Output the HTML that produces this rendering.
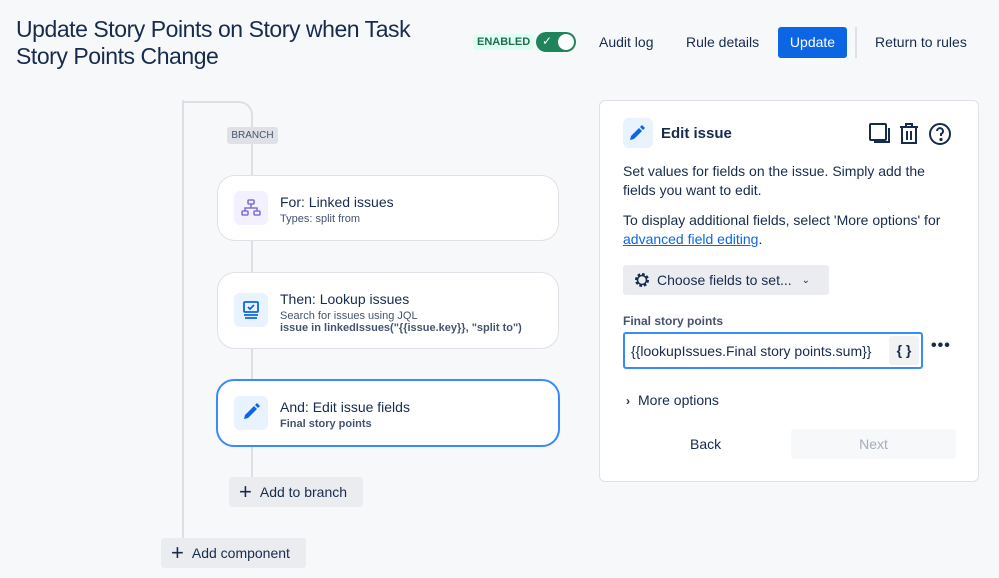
<!DOCTYPE html>
<html><head><meta charset="utf-8"><style>
*{margin:0;padding:0;box-sizing:border-box}
body{width:999px;height:578px;background:#f7f8f9;font-family:"Liberation Sans",sans-serif;color:#172b4d;position:relative;overflow:hidden}
.a{position:absolute}
.card{position:absolute;left:217px;width:342px;background:#fff;border:1px solid #dfe1e6;border-radius:18px}
.ic{position:absolute;left:16px;width:34px;height:34px;border-radius:6px;background:#e9f2ff}
.t{position:absolute;left:62px;font-size:14px;color:#172b4d}
.s{position:absolute;left:62px;font-size:11px;color:#44546f}
.btn{position:absolute;background:#ebecf0;border-radius:3px;font-size:14px;color:#172b4d;display:flex;align-items:center}
</style></head><body>
<div class="a" style="left:16px;top:16px;font-size:23px;line-height:27px;letter-spacing:-0.45px;color:#172b4d">Update Story Points on Story when Task<br>Story Points Change</div>
<div class="a" style="left:473px;top:34px;height:16px;padding:0 4px;background:#dcfff1;color:#216e4e;font-size:11px;font-weight:bold;line-height:16px;border-radius:3px">ENABLED</div>
<div class="a" style="left:536px;top:32px;width:40px;height:20px;border-radius:10px;background:#1f845a">
<span class="a" style="left:6px;top:2px;color:#fff;font-size:12px">✓</span>
<div class="a" style="right:2px;top:2px;width:16px;height:16px;border-radius:50%;background:#fff"></div></div>
<div class="a" style="left:599px;top:34px;font-size:14px">Audit log</div>
<div class="a" style="left:686px;top:34px;font-size:14px">Rule details</div>
<div class="a" style="left:778px;top:27px;width:69px;height:31px;background:#0c66e4;border-radius:3px;color:#fff;font-size:14px;text-align:center;line-height:31px">Update</div>
<div class="a" style="left:855px;top:27px;width:2px;height:31px;background:#dfe1e6"></div>
<div class="a" style="left:875px;top:34px;font-size:14px">Return to rules</div>

<div class="a" style="left:182px;top:100px;width:2px;height:440px;background:#dcdfe4"></div>
<div class="a" style="left:182px;top:101px;width:71px;height:30px;border-top:2px solid #dcdfe4;border-right:2px solid #dcdfe4;border-top-right-radius:14px"></div>
<div class="a" style="left:251px;top:130px;width:2px;height:350px;background:#dcdfe4"></div>
<div class="a" style="left:227px;top:127px;width:51px;height:17px;background:#dfe1e6;border-radius:3px;font-size:10px;color:#44546f;text-align:center;line-height:17px">BRANCH</div>

<div class="card" style="top:175px;height:66px"><div class="ic" style="top:15px;background:#f3f0ff">
<svg width="34" height="34" viewBox="0 0 34 34" fill="none" stroke="#8270db" stroke-width="1.6"><rect x="14" y="9" width="6" height="4" rx="1"/><path d="M17 13v4M11 20v-3h12v3"/><rect x="8" y="20" width="6" height="4" rx="1"/><rect x="20" y="20" width="6" height="4" rx="1"/></svg></div>
<div class="t" style="top:18px">For: Linked issues</div><div class="s" style="top:37px">Types: split from</div></div>

<div class="card" style="top:272px;height:77px"><div class="ic" style="top:20px">
<svg width="34" height="34" viewBox="0 0 34 34" fill="none" stroke="#0c66e4" stroke-width="1.8"><rect x="10" y="9" width="14" height="10" rx="1"/><path d="M14 14l2 2 4-4M10 22h14M11 25h12"/></svg></div>
<div class="t" style="top:18px">Then: Lookup issues</div><div class="s" style="top:37px">Search for issues using JQL</div><div class="s" style="top:49px;font-weight:bold;color:#44546f">issue in linkedIssues("{{issue.key}}, "split to")</div></div>

<div class="card" style="top:379px;height:68px;border:2px solid #388bff;left:216px;width:344px"><div class="ic" style="top:15px">
<svg width="34" height="34" viewBox="0 0 34 34"><path d="M10 23l1-4 9-9 3 3-9 9z M21 9l2-2 3 3-2 2z" fill="#0c66e4"/></svg></div>
<div class="t" style="top:18px">And: Edit issue fields</div><div class="s" style="top:37px;font-weight:bold">Final story points</div></div>

<div class="btn" style="left:229px;top:477px;width:134px;height:30px;padding-left:10px"><span style="font-size:22px;font-weight:300;margin-right:8px;line-height:1">+</span>Add to branch</div>
<div class="btn" style="left:161px;top:538px;width:145px;height:30px;padding-left:10px"><span style="font-size:22px;font-weight:300;margin-right:8px;line-height:1">+</span>Add component</div>

<div class="a" style="left:599px;top:100px;width:380px;height:382px;background:#fff;border:1px solid #dfe1e6;border-radius:6px">
<div class="a" style="left:23px;top:17px;width:30px;height:30px;border-radius:6px;background:#e9f2ff"><svg width="30" height="30" viewBox="0 0 30 30"><path d="M7 22l1-4 8-8 3 3-8 8z M17 9l2-2 3 3-2 2z" fill="#0c66e4"/></svg></div>
<div class="a" style="left:61px;top:24px;font-size:15px;font-weight:bold">Edit issue</div>
<svg class="a" style="left:268px;top:20px" width="86" height="26" viewBox="0 0 86 26" fill="none" stroke="#172b4d" stroke-width="2"><rect x="2" y="3" width="16" height="16" rx="1"/><path d="M21 7v14H6"/><path d="M32 6h18M38 6V3h6v3M34 6v16h14V6M39 10v9M43 10v9"/><circle cx="72" cy="13" r="10"/><path d="M69 10a3 3 0 1 1 4 3v2"/><circle cx="73" cy="18.5" r=".6" fill="#172b4d"/></svg>
<div class="a" style="left:23px;top:61px;font-size:14px;line-height:19px;width:310px">Set values for fields on the issue. Simply add the fields you want to edit.</div>
<div class="a" style="left:23px;top:110px;font-size:14px;line-height:19px;width:340px">To display additional fields, select 'More options' for <span style="color:#0c66e4;text-decoration:underline">advanced field editing</span>.</div>
<div class="btn" style="left:23px;top:164px;width:206px;height:30px;padding-left:10px"><svg width="18" height="18" viewBox="0 0 18 18" style="margin-right:6px"><circle cx="9" cy="9" r="5.5" fill="none" stroke="#172b4d" stroke-width="3" stroke-dasharray="2.5 1.8"/><circle cx="9" cy="9" r="4.5" fill="none" stroke="#172b4d" stroke-width="1.6"/></svg>Choose fields to set... <span style="margin-left:10px;font-size:10px">⌄</span></div>
<div class="a" style="left:23px;top:213px;font-size:12px;font-weight:bold;color:#44546f">Final story points</div>
<div class="a" style="left:23px;top:231px;width:300px;height:37px;border:2px solid #388bff;border-radius:3px">
<div class="a" style="left:6px;top:9px;font-size:14px">{{lookupIssues.Final story points.sum}}</div>
<div class="a" style="right:2px;top:2px;width:30px;height:29px;background:#f1f2f4;border-radius:3px;text-align:center;line-height:29px;font-size:14px;font-weight:bold">{ }</div></div>
<div class="a" style="left:331px;top:236px;font-size:16px;font-weight:bold;letter-spacing:1px">•••</div>
<div class="a" style="left:26px;top:291px;font-size:14px"><b style="font-size:12px;margin-right:8px">›</b>More options</div>
<div class="a" style="left:90px;top:335px;font-size:14px">Back</div>
<div class="a" style="left:191px;top:328px;width:165px;height:30px;background:#f7f8f9;border-radius:3px;text-align:center;line-height:30px;font-size:14px;color:#a5adba">Next</div>
</div>
</body></html>
